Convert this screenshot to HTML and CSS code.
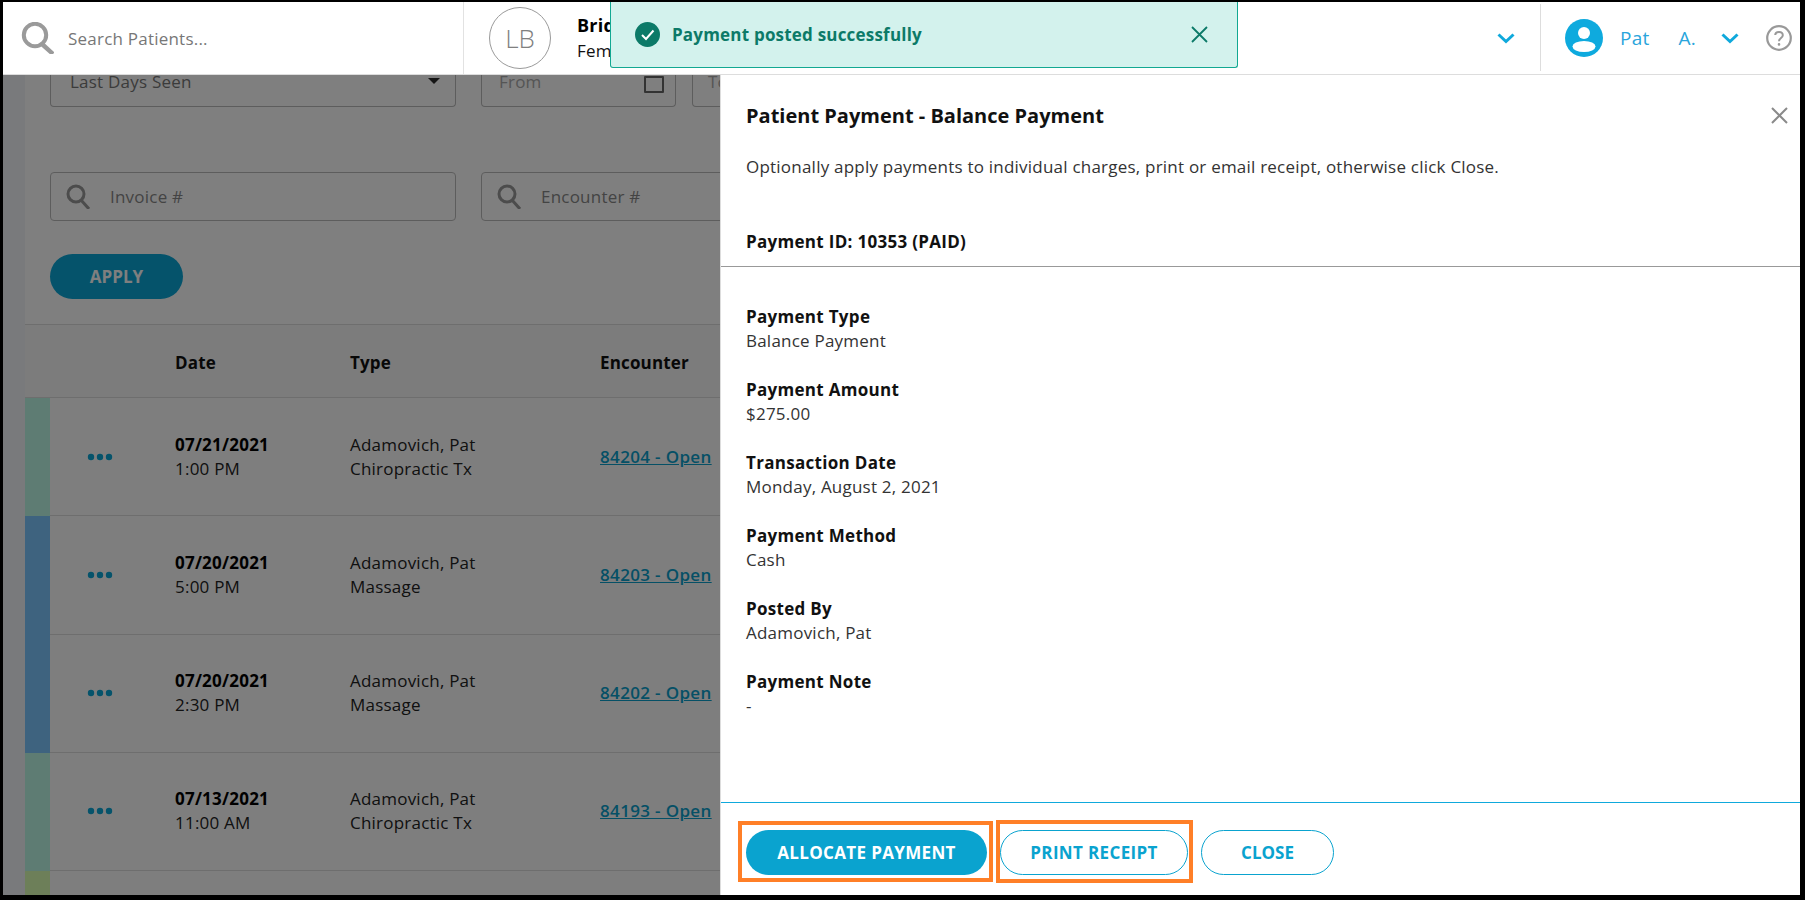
FILE: index.html
```html
<!DOCTYPE html>
<html lang="en">
<head>
<meta charset="utf-8">
<title>Patient Payment</title>
<link rel="stylesheet" href="styles.css">
</head>
<body>
<div class="frame">
  <header class="header">
    <div class="search">
      <svg class="search-icon" viewBox="0 0 33 32"><circle cx="14" cy="13" r="11.2" fill="none" stroke="#9a9a9a" stroke-width="4"/><path d="M21 22 L32 32" stroke="#9a9a9a" stroke-width="4.4" fill="none"/></svg>
      <span>Search Patients...</span>
    </div>
    <div class="patient">
      <div class="avatar">LB</div>
      <div class="patient-info">
        <div class="patient-name">Bridget</div>
        <div class="patient-sex">Female</div>
      </div>
      <svg class="chevron patient-chevron" viewBox="0 0 18 11"><path d="M1.5 1.5 L9 8.5 L16.5 1.5" fill="none" stroke="#0fa9dc" stroke-width="3"/></svg>
    </div>
    <div class="user">
      <svg class="user-icon" viewBox="0 0 38 38"><circle cx="19" cy="19" r="19" fill="#0eaade"/><circle cx="19" cy="14" r="6" fill="#fff"/><ellipse cx="19" cy="27.5" rx="11.5" ry="5.5" fill="#fff"/></svg>
      <span class="user-first">Pat</span>
      <span class="user-last">A.</span>
      <svg class="chevron" viewBox="0 0 18 11"><path d="M1.5 1.5 L9 8.5 L16.5 1.5" fill="none" stroke="#0fa9dc" stroke-width="3"/></svg>
      <svg class="help" viewBox="0 0 26 26"><circle cx="13" cy="13" r="11.8" fill="none" stroke="#999" stroke-width="2.2"/><path d="M9.2 10 C9.4 5.8 16.8 6 16.8 10.2 C16.8 13 13 13 13 16.2" fill="none" stroke="#999" stroke-width="2"/><circle cx="13" cy="19.4" r="1.3" fill="#999"/></svg>
    </div>
  </header>

  <div class="toast">
    <svg class="toast-check" viewBox="0 0 25 25"><circle cx="12.5" cy="12.5" r="12.5" fill="#0c7a68"/><path d="M7 13 L11 17 L18.5 8.5" fill="none" stroke="#fff" stroke-width="2"/></svg>
    <span class="toast-text">Payment posted successfully</span>
    <svg class="toast-close" viewBox="0 0 17 17"><path d="M1 1 L16 16 M16 1 L1 16" stroke="#0c7a68" stroke-width="1.8" fill="none"/></svg>
  </div>

  <main class="body">
    <div class="page">
      <section class="filters">
        <div class="filter-row filter-row-top">
          <div class="field field-wide"><span class="field-value">Last Days Seen</span><span class="caret"></span></div>
          <div class="field field-date"><span class="field-hint">From</span><span class="date-box"></span></div>
          <div class="field field-rest"><span class="field-hint">To</span></div>
        </div>
        <div class="filter-row filter-row-search">
          <div class="field field-wide field-search">
            <svg class="field-icon" viewBox="0 0 24 25"><circle cx="10" cy="10" r="8" fill="none" stroke="#999" stroke-width="3"/><path d="M15 16 L23 25" stroke="#999" stroke-width="3" fill="none"/></svg>
            <span class="field-label">Invoice #</span>
          </div>
          <div class="field field-rest field-search">
            <svg class="field-icon" viewBox="0 0 24 25"><circle cx="10" cy="10" r="8" fill="none" stroke="#999" stroke-width="3"/><path d="M15 16 L23 25" stroke="#999" stroke-width="3" fill="none"/></svg>
            <span class="field-label">Encounter #</span>
          </div>
        </div>
        <button class="apply">APPLY</button>
      </section>

      <section class="table">
        <div class="table-row table-head">
          <span></span><span></span>
          <span class="cell-date">Date</span>
          <span>Type</span>
          <span>Encounter</span>
        </div>
        <div class="table-row">
          <span class="bar bar-teal"></span>
          <span class="dots"><svg viewBox="0 0 26 8"><circle cx="4" cy="4" r="3.2"/><circle cx="13" cy="4" r="3.2"/><circle cx="22" cy="4" r="3.2"/></svg></span>
          <div class="cell-date"><strong>07/21/2021</strong><br>1:00 PM</div>
          <div>Adamovich, Pat<br>Chiropractic Tx</div>
          <a class="enc-link" href="#">84204 - Open</a>
        </div>
        <div class="table-row">
          <span class="bar bar-blue"></span>
          <span class="dots"><svg viewBox="0 0 26 8"><circle cx="4" cy="4" r="3.2"/><circle cx="13" cy="4" r="3.2"/><circle cx="22" cy="4" r="3.2"/></svg></span>
          <div class="cell-date"><strong>07/20/2021</strong><br>5:00 PM</div>
          <div>Adamovich, Pat<br>Massage</div>
          <a class="enc-link" href="#">84203 - Open</a>
        </div>
        <div class="table-row">
          <span class="bar bar-blue"></span>
          <span class="dots"><svg viewBox="0 0 26 8"><circle cx="4" cy="4" r="3.2"/><circle cx="13" cy="4" r="3.2"/><circle cx="22" cy="4" r="3.2"/></svg></span>
          <div class="cell-date"><strong>07/20/2021</strong><br>2:30 PM</div>
          <div>Adamovich, Pat<br>Massage</div>
          <a class="enc-link" href="#">84202 - Open</a>
        </div>
        <div class="table-row">
          <span class="bar bar-teal"></span>
          <span class="dots"><svg viewBox="0 0 26 8"><circle cx="4" cy="4" r="3.2"/><circle cx="13" cy="4" r="3.2"/><circle cx="22" cy="4" r="3.2"/></svg></span>
          <div class="cell-date"><strong>07/13/2021</strong><br>11:00 AM</div>
          <div>Adamovich, Pat<br>Chiropractic Tx</div>
          <a class="enc-link" href="#">84193 - Open</a>
        </div>
        <div class="table-row">
          <span class="bar bar-green"></span>
        </div>
      </section>
    </div>

    <div class="overlay"></div>

    <aside class="modal">
      <svg class="modal-close" viewBox="0 0 17 17"><path d="M1 1 L16 16 M16 1 L1 16" stroke="#8a8a8a" stroke-width="2" fill="none"/></svg>
      <div class="modal-top">
        <h1 class="modal-title">Patient Payment - Balance Payment</h1>
        <p class="modal-desc">Optionally apply payments to individual charges, print or email receipt, otherwise click Close.</p>
        <div class="modal-id">Payment ID: 10353 (PAID)</div>
      </div>
      <dl class="details">
        <div class="detail"><dt>Payment Type</dt><dd>Balance Payment</dd></div>
        <div class="detail"><dt>Payment Amount</dt><dd>$275.00</dd></div>
        <div class="detail"><dt>Transaction Date</dt><dd>Monday, August 2, 2021</dd></div>
        <div class="detail"><dt>Payment Method</dt><dd>Cash</dd></div>
        <div class="detail"><dt>Posted By</dt><dd>Adamovich, Pat</dd></div>
        <div class="detail"><dt>Payment Note</dt><dd>-</dd></div>
      </dl>
      <footer class="modal-footer">
        <div class="callout callout-allocate"><button class="btn btn-primary">ALLOCATE PAYMENT</button></div>
        <div class="callout callout-print"><button class="btn btn-outline btn-print">PRINT RECEIPT</button></div>
        <button class="btn btn-outline btn-close">CLOSE</button>
      </footer>
    </aside>
  </main>
</div>
</body>
</html>
```

FILE: styles.css
```css
* { box-sizing: border-box; }
html, body { margin: 0; height: 100%; background: #000; }
body { font-family: "Open Sans", "Noto Sans", sans-serif; font-size: 17px; letter-spacing: 0.22px; color: #333; overflow: hidden; }

.frame {
  position: relative;
  width: 1805px;
  height: 900px;
  border-style: solid;
  border-color: #000;
  border-width: 2px 5px 5px 3px;
  display: flex;
  flex-direction: column;
  overflow: hidden;
  background: #fff;
}

/* Header */
.header {
  position: relative;
  z-index: 4;
  height: 73px;
  flex: none;
  display: flex;
  background: #fff;
  border-bottom: 1px solid #ddd;
}
.search {
  width: 461px;
  flex: none;
  display: flex;
  align-items: center;
  padding-left: 18px;
  gap: 14px;
  border-right: 1px solid #e2e2e2;
  color: #777;
}
.search-icon { width: 33px; height: 32px; flex: none; }
.patient {
  flex: 1;
  display: flex;
  align-items: center;
  padding-left: 25px;
  padding-right: 25px;
}
.avatar {
  width: 62px;
  height: 62px;
  flex: none;
  border: 1px solid #9a9a9a;
  border-radius: 50%;
  display: flex;
  align-items: center;
  justify-content: center;
  font-size: 26px;
  font-weight: 300;
  letter-spacing: 0;
  color: #808080;
}
.patient-info { margin-left: 26px; flex: 1; }
.patient-name { font-weight: 700; font-size: 18px; line-height: 25px; color: #000; }
.patient-sex { line-height: 25px; color: #111; }
.chevron { width: 18px; height: 11px; flex: none; }
.user {
  width: 260px;
  flex: none;
  display: flex;
  align-items: center;
  position: relative;
  padding-left: 25px;
  color: #2aa5dc;
  font-size: 19px;
}
.user::before {
  content: "";
  position: absolute;
  left: 0;
  top: 2px;
  bottom: 3px;
  width: 1px;
  background: #ddd;
}
.user-icon { width: 38px; height: 38px; flex: none; }
.user-first { margin-left: 17px; }
.user-last { margin-left: 29px; }
.user .chevron { margin-left: 25px; }
.help { width: 26px; height: 26px; margin-left: 27px; flex: none; }

/* Toast */
.toast {
  position: absolute;
  z-index: 5;
  left: 607px;
  top: 0;
  width: 628px;
  height: 66px;
  display: flex;
  align-items: center;
  padding-left: 24px;
  background: #d3f2ed;
  border: 1px solid #12a892;
  border-top: 0;
  border-radius: 0 0 3px 3px;
  color: #0c7a68;
}
.toast-check { width: 25px; height: 25px; flex: none; }
.toast-text { margin-left: 12px; font-weight: 700; letter-spacing: 0.2px; flex: 1; }
.toast-close { width: 17px; height: 17px; margin-right: 29px; flex: none; }

/* Page under the overlay */
.body { position: relative; flex: 1; min-height: 0; background: #f2f5f9; }
.page { padding-left: 22px; height: 100%; }
.filters { padding-left: 25px; background: #fff; height: 250px; border-bottom: 1px solid #ddd; }
.filter-row { display: flex; }
.filter-row-top { gap: 25px; height: 32px; }
.filter-row-search { gap: 25px; height: 49px; margin-top: 65px; }
.field {
  display: flex;
  align-items: center;
  border: 1px solid #bbb;
  border-radius: 4px;
  position: relative;
  color: #777;
}
.filter-row-top .field { border-top: 0; border-radius: 0 0 4px 4px; align-items: flex-start; line-height: 14px; }
.field-wide { width: 406px; flex: none; padding-left: 19px; padding-right: 15px; justify-content: space-between; }
.field-value { color: #777; }
.caret { width: 0; height: 0; margin-top: 3px; border-left: 6.5px solid transparent; border-right: 6.5px solid transparent; border-top: 6.5px solid #2a2a2a; }
.field-date { width: 195px; flex: none; padding-left: 17px; padding-right: 11px; justify-content: space-between; margin-right: -9px; }
.field-hint { color: #aaa; }
.date-box { width: 20px; height: 17px; margin-top: 1px; border: 2px solid #666; border-radius: 1px; }
.field-rest { flex: 1; }
.filter-row-top .field-rest { padding-left: 15px; }
.field-search { justify-content: flex-start; padding-left: 15px; }
.field-icon { width: 24px; height: 25px; flex: none; }
.field-label { margin-left: 20px; color: #888; }
.apply {
  display: block;
  width: 133px;
  height: 45px;
  margin-top: 33px;
  border: 0;
  border-radius: 23px;
  background: #0aa6d6;
  color: #fff;
  font: 700 17px "Open Sans", sans-serif;
}

.table { background: #fdfdfd; }
.table-row {
  display: grid;
  grid-template-columns: 25px 100px 200px 250px 1fr;
  align-items: center;
  height: 118.25px;
  line-height: 24px;
  border-bottom: 1px solid #ddd;
  color: #222;
}
.table-head { height: 73px; font-weight: 700; letter-spacing: 0.15px; color: #111; background: #f9f9f9; padding-top: 4px; }
.cell-date { padding-left: 25px; }
.cell-date strong { font-weight: 700; color: #000; }
.bar { align-self: stretch; display: block; margin-bottom: -1px; }
.bar-teal { background: #bcf9e6; }
.bar-blue { background: #7cc6ff; }
.bar-green { background: #dbffb2; }
.dots { display: flex; justify-content: center; fill: #0aa6d6; }
.dots svg { width: 26px; height: 8px; }
.enc-link { color: #0aa0cc; font-weight: 600; letter-spacing: 0.35px; text-decoration: underline; }

.overlay { position: absolute; inset: 0; background: rgba(0, 0, 0, 0.5); }

/* Modal */
.modal {
  position: absolute;
  top: 0;
  right: 0;
  bottom: 0;
  width: 1080px;
  background: #fff;
  border-left: 1px solid #ddd;
  display: flex;
  flex-direction: column;
  color: #333;
}
.modal-close { position: absolute; right: 12px; top: 32px; width: 17px; height: 17px; }
.modal-top { padding: 27px 25px 0; border-bottom: 1px solid #999; height: 192px; }
.modal-title { margin: 0; font-size: 20px; font-weight: 700; letter-spacing: 0; line-height: 28px; color: #111; }
.modal-desc { margin: 25px 0 0; line-height: 24px; }
.modal-id { margin-top: 51px; font-weight: 700; letter-spacing: 0.3px; line-height: 24px; color: #111; }
.details { margin: 0; padding: 38px 25px 0; flex: 1; }
.detail { height: 73px; line-height: 24px; }
.detail dt { font-weight: 700; letter-spacing: 0.3px; color: #111; }
.detail dd { margin: 0; }
.modal-footer {
  height: 93px;
  flex: none;
  border-top: 1px solid #0fa9dc;
  display: flex;
  align-items: flex-start;
  padding: 27px 0 0 25px;
}
.callout { position: relative; }
.callout::after {
  content: "";
  position: absolute;
  border: 4px solid #ff7f27;
  pointer-events: none;
}
.callout-allocate::after { inset: -9px -6px -7px -8px; }
.callout-print::after { inset: -10px -5px -8px -4px; }
.btn {
  display: block;
  height: 45px;
  border-radius: 23px;
  font: 700 17px "Open Sans", sans-serif;
  letter-spacing: 0.35px;
}
.btn-primary { width: 241px; background: #0aa3cf; color: #fff; border: 0; }
.btn-outline { background: #fff; color: #0aa3cf; border: 1px solid #0aa3cf; }
.callout-print { margin-left: 13px; }
.btn-print { width: 188px; }
.btn-close { width: 133px; margin-left: 13px; letter-spacing: 0; }
```
